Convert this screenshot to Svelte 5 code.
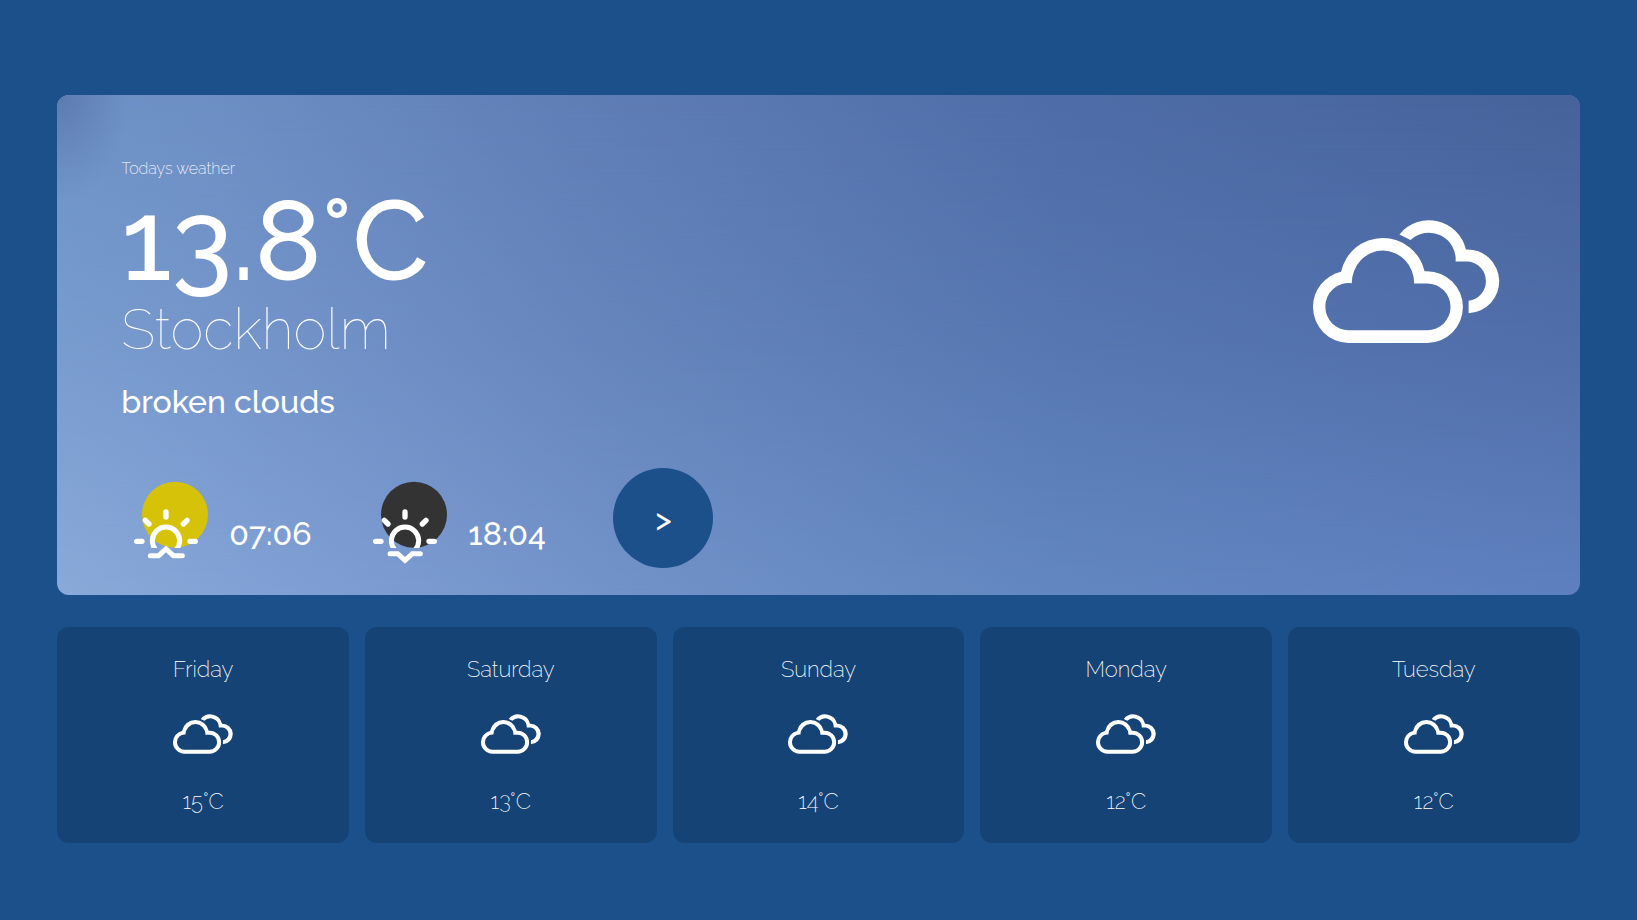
<script>
  const today = {
    label: 'Todays weather',
    temp: '13.8°C',
    city: 'Stockholm',
    description: 'broken clouds',
    sunrise: '07:06',
    sunset: '18:04'
  };

  const forecast = [
    { day: 'Friday', temp: '15°C' },
    { day: 'Saturday', temp: '13°C' },
    { day: 'Sunday', temp: '14°C' },
    { day: 'Monday', temp: '12°C' },
    { day: 'Tuesday', temp: '12°C' }
  ];
</script>

{#snippet clouds(cls)}
  <svg class={cls} viewBox="68 60 560 368" aria-hidden="true">
    <path
      fill="#fff"
      fill-rule="evenodd"
      d="M152 215A128 128 0 0 1 402 213H409.500A107.500 107.500 0 0 1 409.500 428H175.500A107.500 107.500 0 0 1 68 320.500A107.500 107.500 0 0 1 152 215ZM184 249A93.500 98 0 0 1 371 250H410A70 70 0 0 1 410 390H175A70 70 0 0 1 105 320A70 70 0 0 1 184 249Z"
    />
    <path
      fill="#fff"
      d="M327 103A113.500 113.500 0 0 1 526 148A95.500 95.500 0 1 1 534 339V302A59.500 59.500 0 0 0 534 184H495A80 80 0 0 0 360 120Z"
    />
  </svg>
{/snippet}

{#snippet sun()}
  <path
    d="M198 186V201M136 211L147 222M261 211L250 222M110 274H126M270 274H286"
    stroke-width="16"
    stroke-linecap="round"
  />
  <path d="M167 299A41 41 0 1 1 229 299" stroke-width="15" clip-path="url(#horizon)" />
{/snippet}

<main>
  <section class="today">
    <div class="details">
      <p class="label">{today.label}</p>
      <h1>{today.temp}</h1>
      <h2>{today.city}</h2>
      <p class="description">{today.description}</p>

      <div class="sun-row">
        <div class="sun-time">
          <svg viewBox="99 66 228 276" fill="none" stroke="#fff" role="img" aria-label="Sunrise">
            <defs>
              <clipPath id="horizon"><rect x="99" y="66" width="228" height="228" /></clipPath>
            </defs>
            <circle cx="225" cy="194" r="99" fill="#d6c209" stroke="none" />
            {@render sun()}
            <path d="M151 317H176L198 297L220 317H247" stroke-width="15" stroke-linecap="round" />
          </svg>
          <time>{today.sunrise}</time>
        </div>
        <div class="sun-time">
          <svg viewBox="99 66 228 276" fill="none" stroke="#fff" role="img" aria-label="Sunset">
            <circle cx="225" cy="194" r="99" fill="#333" stroke="none" />
            {@render sun()}
            <path d="M153 311H176L198 331L220 311H244" stroke-width="15" stroke-linecap="round" />
          </svg>
          <time>{today.sunset}</time>
        </div>
        <button type="button" aria-label="Next city">&gt;</button>
      </div>
    </div>
    {@render clouds('today-icon')}
  </section>

  <section class="forecast">
    {#each forecast as item}
      <article>
        <h3>{item.day}</h3>
        {@render clouds('day-icon')}
        <p>{item.temp}</p>
      </article>
    {/each}
  </section>
</main>

<style>
  :global(body) {
    background: #1b508b;
    color: #fff;
    font-family: Raleway, Lato, sans-serif;
  }

  main {
    display: flex;
    flex-direction: column;
    gap: 32px;
    width: 93%;
    margin: 0 auto;
    padding: 95px 0 76px;
  }

  h1,
  h2,
  h3,
  p {
    margin: 0;
  }

  .today {
    position: relative;
    isolation: isolate;
    display: flex;
    justify-content: space-between;
    align-items: flex-start;
    padding: 64px 80px 27px 64px;
    border-radius: 12px;
    overflow: hidden;
    background: linear-gradient(90deg, #8aaad9, #7d9dd3 20%, #7192c9 38%, #6387c1 66%, #5f80bf);
  }

  .today::before {
    content: '';
    position: absolute;
    inset: 0;
    z-index: -1;
    background:
      radial-gradient(ellipse 72px 110px at 0 0, rgba(70, 92, 150, 0.45), rgba(70, 92, 150, 0)),
      linear-gradient(90deg, #6d92c6, #6c8ec4 10%, #5f7db6 34%, #4e6ca7 66%, #46629b);
    mask-image: linear-gradient(#000, rgba(0, 0, 0, 0.6) 50%, transparent);
  }

  .label {
    font-size: 16px;
    font-weight: 200;
    line-height: 19px;
  }

  h1 {
    margin-top: 7px;
    font-size: 112px;
    font-weight: 500;
    line-height: 112px;
  }

  h2 {
    margin-top: 4px;
    font-size: 56px;
    font-weight: 100;
    line-height: 56px;
  }

  .description {
    margin-top: 26px;
    font-size: 32px;
    font-weight: 500;
    line-height: 38px;
  }

  .sun-row {
    display: grid;
    grid-template-columns: 239px 241px 100px;
    align-items: center;
    margin-top: 47px;
    padding-left: 12px;
  }

  .sun-time {
    display: flex;
    gap: 20px;
  }

  .sun-time svg {
    width: 76px;
    height: 92px;
  }

  time {
    padding-top: 43px;
    font-size: 32px;
    font-weight: 500;
    line-height: 38px;
  }

  button {
    width: 100px;
    height: 100px;
    padding: 0;
    border: 0;
    border-radius: 50%;
    background: #1b508b;
    color: #fff;
    font: 500 32px Raleway, Lato, sans-serif;
    cursor: pointer;
  }

  .today-icon {
    width: 187px;
    height: 123px;
    margin-top: 61px;
  }

  .forecast {
    display: grid;
    grid-template-columns: repeat(5, 1fr);
    gap: 16px;
  }

  article {
    display: flex;
    flex-direction: column;
    align-items: center;
    padding: 28px 16px;
    border-radius: 12px;
    background: #154375;
  }

  h3,
  article p {
    font-size: 22px;
    font-weight: 200;
    line-height: 28px;
  }

  .day-icon {
    width: 60px;
    height: 40px;
    margin: 31px 0 33px;
  }
</style>
